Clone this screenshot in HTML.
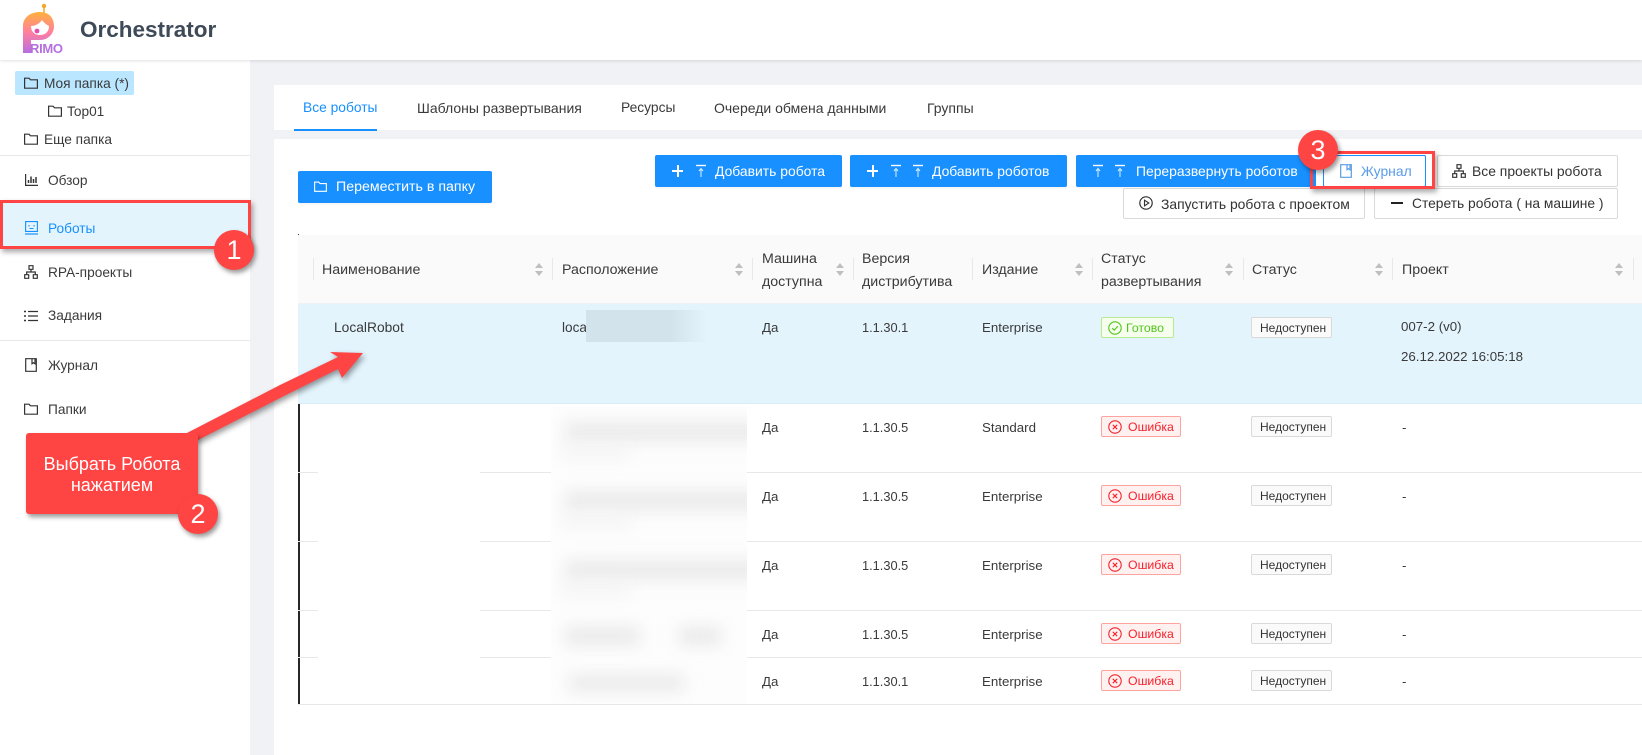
<!DOCTYPE html>
<html lang="ru"><head><meta charset="utf-8"><title>Orchestrator</title>
<style>
*{box-sizing:border-box}
html,body{margin:0;padding:0;width:1642px;height:755px;overflow:hidden;background:#f0f2f5;font-family:"Liberation Sans","Noto Sans CJK SC",sans-serif;font-size:14px;color:#3a3a3a}
.a,.t,.btn,.tag{position:absolute}
.t{white-space:nowrap;line-height:20px;height:20px;margin-top:-10px}
.c{font-size:13.300px;margin-top:-9px}
.n{font-size:12.800px;margin-top:-9px}
.side{font-size:13.700px;margin-top:-9px}
.tab{font-size:14px}
.btn{height:32px;border-radius:2px;display:block;white-space:nowrap;line-height:30px}
.btn .t{font-size:13.900px;margin-top:-11px}
.pri{background:#1890ff;color:#fff;box-shadow:0 2px 0 rgba(0,0,0,.03)}
.def{background:#fff;border:1px solid #d9d9d9;color:#333}
.btn svg,.btn .t{position:absolute}
.line{position:absolute;height:1px;background:#e8e8e8}
.dv{position:absolute;width:1px;height:22px;top:258px;background:#e8e8e8}
.h{font-size:14.200px;margin-top:-9px}
.tag{height:21px;border-radius:2px;font-size:12.300px;line-height:20px;border:1px solid;white-space:nowrap}
.ok{left:1101px;width:73px;background:#f6ffed;border-color:#b7eb8f;color:#52c41a;padding-left:24px}
.er{left:1101px;width:80px;background:#fff1f0;border-color:#ffa39e;color:#f5222d;padding-left:26px}
.na{left:1251px;width:81px;background:#fafafa;border-color:#d9d9d9;color:#333;padding-left:8px;font-size:12px}
.tag svg{position:absolute;left:6px;top:3px}
.s{position:absolute;width:8px;height:13px}
.k{position:absolute;width:2px;background:#26262b;left:298px}
.badge{position:absolute;width:40px;height:40px;border-radius:50%;background:#ff4444;color:#fff;font-size:27px;line-height:40px;text-align:center;box-shadow:2px 3px 5px rgba(0,0,0,.4)}
.rb{position:absolute;border:3px solid #ff4444;box-shadow:2px 3px 5px rgba(0,0,0,.35)}
.i{position:absolute;fill:none;stroke:#333;stroke-width:1.2}
.b{position:absolute;background:#e9e9e9;filter:blur(8px)}
</style></head><body>
<svg width="0" height="0" style="position:absolute">
<defs>
<symbol id="fo" viewBox="0 0 14 12"><path d="M.6 1.2h4.4l1.5 1.6h6.9v8.4H.6z" fill="none" stroke="currentColor" stroke-width="1.2"/></symbol>
<symbol id="up" viewBox="0 0 12 14"><path d="M1 1.500h10" stroke="currentColor" stroke-width="1.400" fill="none"/><path d="M6 13V5M4 7l2-2.500 2 2.500" stroke="currentColor" stroke-width="1.100" fill="none" opacity=".8"/></symbol>
<symbol id="sort" viewBox="0 0 8 13"><path d="M4 0l4 5H0zM4 13L0 8h8z" fill="#bfbfbf"/></symbol>
<symbol id="tree" viewBox="0 0 14 14"><path d="M5 .7h4v3.600H5zM.7 9.700h4v3.600h-4zM9.300 9.700h4v3.600h-4zM7 4.300v2.700M2.700 9.700V7h8.600v2.700" fill="none" stroke="currentColor" stroke-width="1.200"/></symbol>
<symbol id="book" viewBox="0 0 12 14"><path d="M.7.7h10.600v12.600H.7zM7 .7v5l1.500-1 1.500 1v-5" fill="none" stroke="currentColor" stroke-width="1.200"/></symbol>
<symbol id="x" viewBox="0 0 14 14"><circle cx="7" cy="7" r="6.200" fill="none" stroke="currentColor" stroke-width="1.100"/><path d="M4.800 4.800l4.400 4.400M9.200 4.800l-4.400 4.400" stroke="currentColor" stroke-width="1.100"/></symbol>
<symbol id="c" viewBox="0 0 14 14"><circle cx="7" cy="7" r="6.200" fill="none" stroke="currentColor" stroke-width="1.100"/><path d="M4.200 7.200l2 2 3.600-4" stroke="currentColor" stroke-width="1.100" fill="none"/></symbol>
</defs></svg>

<!-- header -->
<div class="a" style="left:0;top:0;width:1642px;height:60px;background:#fff;box-shadow:0 1px 3px rgba(0,0,0,.12);z-index:3">
<svg class="a" style="left:20px;top:2px" width="50" height="54" viewBox="0 0 50 54">
<defs><linearGradient id="g" x1="0" y1="0" x2="0" y2="1"><stop offset="0" stop-color="#ffb13d"/><stop offset=".5" stop-color="#ff7fa0"/><stop offset="1" stop-color="#b56fe0"/></linearGradient></defs>
<circle cx="24" cy="4" r="2.200" fill="#f5a623"/><path d="M24 5v6" stroke="#f5a623" stroke-width="1.500"/>
<path d="M3 51V24C3 15 11 10 20 10c10 0 14 7 14 14 0 8-6 14-14 14h-9v13z" fill="url(#g)"/>
<path d="M11 24c5 0 9-3 11-6 2 3 5 5 7 6 0 6-4 9-9 9-5 0-9-3-9-9z" fill="#fff"/>
<circle cx="17" cy="29" r="2.400" fill="#e04fb0"/>
<text x="10" y="51" font-family="Liberation Sans,sans-serif" font-weight="bold" font-size="13" fill="#b56fe0" textLength="33" lengthAdjust="spacing">RIMO</text>
</svg>
<span class="t" style="left:80px;top:30px;font-size:22.500px;font-weight:bold;color:#3f4a58;height:30px;line-height:30px;margin-top:-15px">Orchestrator</span>
</div>

<!-- sidebar -->
<div class="a" style="left:0;top:60px;width:250px;height:695px;background:#fff"></div>
<div class="a" style="left:15px;top:71px;width:119px;height:24px;background:#bae7ff;border-radius:2px"></div>
<svg class="a" style="left:24px;top:77px;color:#333" width="14" height="12"><use href="#fo"/></svg>
<span class="t side" style="left:44px;top:83px">Моя папка (*)</span>
<svg class="a" style="left:48px;top:105px;color:#333" width="14" height="12"><use href="#fo"/></svg>
<span class="t side" style="left:67px;top:111px">Top01</span>
<svg class="a" style="left:24px;top:133px;color:#333" width="14" height="12"><use href="#fo"/></svg>
<span class="t side" style="left:44px;top:139px">Еще папка</span>
<div class="line" style="left:0;top:155px;width:250px"></div>
<svg class="i" style="left:25px;top:174px" width="13" height="12" viewBox="0 0 13 12"><path d="M.6 0v11.400H13"/><path d="M3.500 9V6M6 9V2.500M8.500 9V5M11 9V3" stroke-width="1.500"/></svg>
<span class="t side" style="left:48px;top:180px">Обзор</span>
<div class="a" style="left:0;top:201px;width:250px;height:47px;background:#e3f4fd"></div>
<div class="a" style="left:248px;top:207px;width:2px;height:40px;background:#1890ff"></div>
<svg class="a" style="left:25px;top:221px;color:#1890ff" width="13" height="14" viewBox="0 0 13 14"><path d="M.6.6h11.800v9.800H.6z" fill="none" stroke="currentColor" stroke-width="1.100"/><path d="M0 13h13" stroke="currentColor" stroke-width="1.200"/><path d="M4 4v1.500M9 4v1.500M4.500 7.500h4" stroke="currentColor" stroke-width="1.100"/></svg>
<span class="t side" style="left:48px;top:228px;color:#1890ff">Роботы</span>
<svg class="a" style="left:24px;top:265px;color:#333" width="14" height="14"><use href="#tree"/></svg>
<span class="t side" style="left:48px;top:272px">RPA-проекты</span>
<svg class="i" style="left:24px;top:310px" width="14" height="12" viewBox="0 0 14 12"><path d="M4 1.500h10M4 6h10M4 10.500h10"/><path d="M0 1.500h2M0 6h2M0 10.500h2" stroke-width="1.400"/></svg>
<span class="t side" style="left:48px;top:315px">Задания</span>
<div class="line" style="left:0;top:340px;width:250px"></div>
<svg class="a" style="left:25px;top:358px;color:#333" width="12" height="14"><use href="#book"/></svg>
<span class="t side" style="left:48px;top:365px">Журнал</span>
<svg class="a" style="left:24px;top:403px;color:#333" width="14" height="12"><use href="#fo"/></svg>
<span class="t side" style="left:48px;top:409px">Папки</span>

<!-- tabs -->
<div class="a" style="left:274px;top:85px;width:1368px;height:45px;background:#fff"></div>
<span class="t tab" style="left:303px;top:108px;color:#1890ff;font-size:13.800px">Все роботы</span>
<span class="t tab" style="left:417px;top:108px">Шаблоны развертывания</span>
<span class="t tab" style="left:621px;top:108px;font-size:13.800px">Ресурсы</span>
<span class="t tab" style="left:714px;top:108px">Очереди обмена данными</span>
<span class="t tab" style="left:927px;top:108px">Группы</span>
<div class="a" style="left:294px;top:129px;width:83px;height:2px;background:#1890ff"></div>

<!-- card -->
<div class="a" style="left:274px;top:139px;width:1368px;height:616px;background:#fff"></div>

<!-- buttons -->
<div class="btn pri" style="left:298px;top:171px;width:194px"><svg style="left:16px;top:10px;color:#fff" width="13" height="11"><use href="#fo"/></svg><span class="t" style="left:38px;top:17px;font-size:14.200px">Переместить в папку</span></div>
<div class="btn pri" style="left:655px;top:155px;width:187px"><span class="a" style="left:17px;top:15px;width:11px;height:2px;background:#fff"></span><span class="a" style="left:21.500px;top:10px;width:2px;height:12px;background:#fff"></span><svg style="left:40px;top:9px;color:#fff" width="12" height="14"><use href="#up"/></svg><span class="t" style="left:60px;top:17px">Добавить робота</span></div>
<div class="btn pri" style="left:850px;top:155px;width:217px"><span class="a" style="left:17px;top:15px;width:11px;height:2px;background:#fff"></span><span class="a" style="left:21.500px;top:10px;width:2px;height:12px;background:#fff"></span><svg style="left:40px;top:9px;color:#fff" width="12" height="14"><use href="#up"/></svg><svg style="left:62px;top:9px;color:#fff" width="12" height="14"><use href="#up"/></svg><span class="t" style="left:82px;top:17px">Добавить роботов</span></div>
<div class="btn pri" style="left:1076px;top:155px;width:240px"><svg style="left:16px;top:9px;color:#fff" width="12" height="14"><use href="#up"/></svg><svg style="left:38px;top:9px;color:#fff" width="12" height="14"><use href="#up"/></svg><span class="t" style="left:60px;top:17px">Переразвернуть роботов</span></div>
<div class="btn def" style="left:1323px;top:155px;width:103px;border-color:#1890ff;color:#5a9be8"><svg style="left:16px;top:8px;color:#5a9be8" width="12" height="14"><use href="#book"/></svg><span class="t" style="left:37px;top:16px">Журнал</span></div>
<div class="btn def" style="left:1437px;top:155px;width:181px"><svg style="left:14px;top:8px;color:#333" width="14" height="14"><use href="#tree"/></svg><span class="t" style="left:34px;top:16px">Все проекты робота</span></div>
<div class="btn def" style="left:1123px;top:188px;width:242px;height:31px"><svg style="left:15px;top:7px;color:#333" width="14" height="14" viewBox="0 0 14 14"><circle cx="7" cy="7" r="6.200" fill="none" stroke="currentColor" stroke-width="1.200"/><path d="M5.500 4.200L9.800 7l-4.300 2.800z" fill="none" stroke="currentColor" stroke-width="1.100"/></svg><span class="t" style="left:37px;top:16px">Запустить робота с проектом</span></div>
<div class="btn def" style="left:1374px;top:188px;width:244px;height:31px"><span class="a" style="left:16px;top:13px;width:12px;height:2px;background:#222"></span><span class="t" style="left:37px;top:16px;font-size:13.800px">Стереть робота ( на машине )</span></div>

<!-- table head -->
<div class="a" style="left:298px;top:234px;width:1px;height:2px;background:#333"></div>
<div class="a" style="left:298px;top:235px;width:1344px;height:68px;background:#fafafa"></div>
<div class="dv" style="left:313px"></div><div class="dv" style="left:552px"></div><div class="dv" style="left:752px"></div><div class="dv" style="left:853px"></div><div class="dv" style="left:972px"></div><div class="dv" style="left:1092px"></div><div class="dv" style="left:1243px"></div><div class="dv" style="left:1392px"></div><div class="dv" style="left:1633px"></div>
<span class="t h" style="left:322px;top:269px">Наименование</span>
<span class="t h" style="left:562px;top:269px">Расположение</span>
<span class="t h" style="left:762px;top:258px">Машина</span><span class="t h" style="left:762px;top:281px">доступна</span>
<span class="t h" style="left:862px;top:258px">Версия</span><span class="t h" style="left:862px;top:281px">дистрибутива</span>
<span class="t h" style="left:982px;top:269px">Издание</span>
<span class="t h" style="left:1101px;top:258px">Статус</span><span class="t h" style="left:1101px;top:281px">развертывания</span>
<span class="t h" style="left:1252px;top:269px">Статус</span>
<span class="t h" style="left:1402px;top:269px">Проект</span>
<svg class="s" style="left:535px;top:263px"><use href="#sort"/></svg>
<svg class="s" style="left:735px;top:263px"><use href="#sort"/></svg>
<svg class="s" style="left:836px;top:263px"><use href="#sort"/></svg>
<svg class="s" style="left:1075px;top:263px"><use href="#sort"/></svg>
<svg class="s" style="left:1225px;top:263px"><use href="#sort"/></svg>
<svg class="s" style="left:1375px;top:263px"><use href="#sort"/></svg>
<svg class="s" style="left:1615px;top:263px"><use href="#sort"/></svg>

<!-- selected row -->
<div class="a" style="left:298px;top:303px;width:1344px;height:101px;background:#e3f4fd;border-top:1px solid #eef2f4;border-bottom:1px solid #d9edf7"></div>
<span class="t" style="left:334px;top:328px;font-size:13.800px">LocalRobot</span>
<span class="t" style="left:562px;top:328px;font-size:13.600px">loca</span>
<div class="a" style="left:586px;top:310px;width:121px;height:32px;background:linear-gradient(90deg,#d2e3ec 0,#d2e3ec 70%,#e3f4fd 100%)"></div>
<span class="t c" style="left:762px;top:327px">Да</span><span class="t n" style="left:862px;top:327px">1.1.30.1</span><span class="t c" style="left:982px;top:327px">Enterprise</span>
<div class="tag ok" style="top:317px"><svg width="14" height="14"><use href="#c"/></svg>Готово</div>
<div class="tag na" style="top:317px">Недоступен</div>
<span class="t c" style="left:1401px;top:326px">007-2 (v0)</span>
<span class="t c" style="left:1401px;top:356px">26.12.2022 16:05:18</span>

<!-- rows -->
<div class="line" style="left:298px;top:472px;width:1344px"></div>
<div class="line" style="left:298px;top:541px;width:1344px"></div>
<div class="line" style="left:298px;top:610px;width:1344px"></div>
<div class="line" style="left:298px;top:657px;width:1344px"></div>
<div class="a" style="left:318px;top:404px;width:162px;height:299px;background:#fff"></div>
<div class="line" style="left:298px;top:704px;width:1344px"></div>
<div class="k" style="top:404px;height:68px"></div><div class="k" style="top:473px;height:68px"></div><div class="k" style="top:542px;height:68px"></div><div class="k" style="top:611px;height:46px"></div><div class="k" style="top:658px;height:46px"></div>

<!-- blurred -->
<div class="a" style="left:551px;top:407px;width:196px;height:297px;overflow:hidden;background:#fdfdfd">
<div class="b" style="left:14px;top:16px;width:200px;height:18px"></div>
<div class="b" style="left:10px;top:40px;width:70px;height:10px;background:#f2f2f2"></div>
<div class="b" style="left:14px;top:85px;width:200px;height:18px"></div>
<div class="b" style="left:10px;top:109px;width:70px;height:10px;background:#f2f2f2"></div>
<div class="b" style="left:14px;top:154px;width:200px;height:18px"></div>
<div class="b" style="left:10px;top:178px;width:70px;height:10px;background:#f2f2f2"></div>
<div class="b" style="left:14px;top:220px;width:75px;height:18px"></div>
<div class="b" style="left:128px;top:220px;width:42px;height:18px"></div>
<div class="b" style="left:18px;top:268px;width:115px;height:16px"></div>
</div>

<span class="t c" style="left:762px;top:427px">Да</span><span class="t n" style="left:862px;top:427px">1.1.30.5</span><span class="t c" style="left:982px;top:427px">Standard</span>
<div class="tag er" style="top:416px"><svg width="14" height="14"><use href="#x"/></svg>Ошибка</div><div class="tag na" style="top:416px">Недоступен</div><span class="t c" style="left:1402px;top:427px">-</span>
<span class="t c" style="left:762px;top:496px">Да</span><span class="t n" style="left:862px;top:496px">1.1.30.5</span><span class="t c" style="left:982px;top:496px">Enterprise</span>
<div class="tag er" style="top:485px"><svg width="14" height="14"><use href="#x"/></svg>Ошибка</div><div class="tag na" style="top:485px">Недоступен</div><span class="t c" style="left:1402px;top:496px">-</span>
<span class="t c" style="left:762px;top:565px">Да</span><span class="t n" style="left:862px;top:565px">1.1.30.5</span><span class="t c" style="left:982px;top:565px">Enterprise</span>
<div class="tag er" style="top:554px"><svg width="14" height="14"><use href="#x"/></svg>Ошибка</div><div class="tag na" style="top:554px">Недоступен</div><span class="t c" style="left:1402px;top:565px">-</span>
<span class="t c" style="left:762px;top:634px">Да</span><span class="t n" style="left:862px;top:634px">1.1.30.5</span><span class="t c" style="left:982px;top:634px">Enterprise</span>
<div class="tag er" style="top:623px"><svg width="14" height="14"><use href="#x"/></svg>Ошибка</div><div class="tag na" style="top:623px">Недоступен</div><span class="t c" style="left:1402px;top:634px">-</span>
<span class="t c" style="left:762px;top:681px">Да</span><span class="t n" style="left:862px;top:681px">1.1.30.1</span><span class="t c" style="left:982px;top:681px">Enterprise</span>
<div class="tag er" style="top:670px"><svg width="14" height="14"><use href="#x"/></svg>Ошибка</div><div class="tag na" style="top:670px">Недоступен</div><span class="t c" style="left:1402px;top:681px">-</span>

<!-- annotations -->
<div class="rb" style="left:0;top:200px;width:251px;height:49px"></div>
<div class="rb" style="left:1310px;top:151px;width:125px;height:38px"></div>
<svg class="a" style="left:0;top:0;filter:drop-shadow(2px 3px 3px rgba(0,0,0,.4))" width="400" height="460"><path d="M185 434L280 385 338 357 330 352 363 353 342 378 338 369 280 398 198 440z" fill="#ff4444"/></svg>
<div class="a" style="left:26px;top:433px;width:172px;height:81px;background:#ff4444;border-radius:3px;box-shadow:2px 3px 5px rgba(0,0,0,.4);color:#fff;font-size:18px;line-height:21px;text-align:center;padding-top:21px">Выбрать Робота<br>нажатием</div>
<div class="badge" style="left:214px;top:230px">1</div>
<div class="badge" style="left:178px;top:494px">2</div>
<div class="badge" style="left:1298px;top:130px">3</div>
</body></html>
